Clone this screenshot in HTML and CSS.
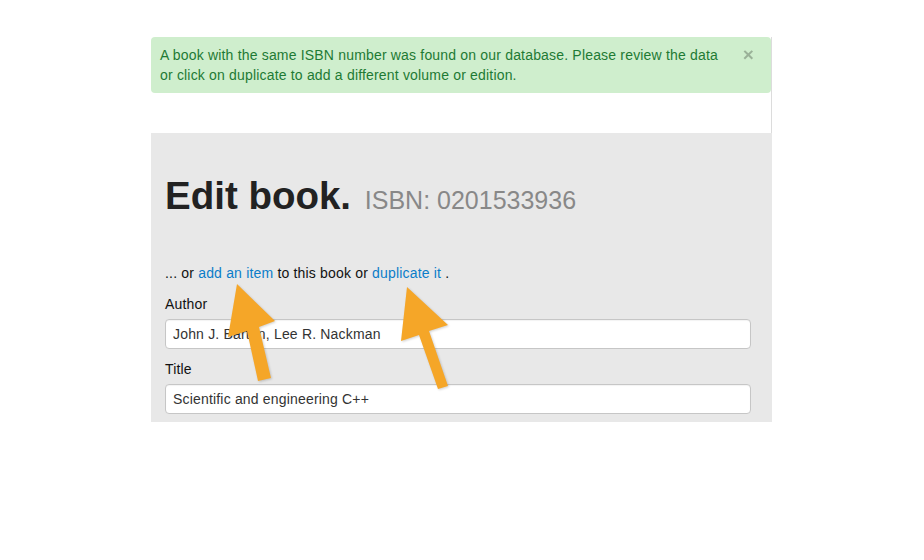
FILE: index.html
```html
<!DOCTYPE html>
<html>
<head>
<meta charset="utf-8">
<link rel="stylesheet" href="styles.css">
</head>
<body>
<div class="page">
  <div class="top">
    <div class="alert">
      <div class="alert-text">A book with the same ISBN number was found on our database. Please review the data or click on duplicate to add a different volume or edition.</div>
      <span class="close">×</span>
    </div>
  </div>
  <div class="panel">
    <h1 class="title">Edit book. <small class="isbn">ISBN: 0201533936</small></h1>
    <p class="actions">... or <a class="link" href="#">add an item</a> to this book or <a class="link" href="#">duplicate it</a> .</p>
    <label class="label">Author</label>
    <input class="field" type="text" value="John J. Barton, Lee R. Nackman">
    <label class="label label-gap">Title</label>
    <input class="field" type="text" value="Scientific and engineering C++">
  </div>
</div>
<svg class="arrows" width="924" height="560" viewBox="0 0 924 560">
  <g class="arrow-shapes">
    <polygon points="237,284 275,321 259,327 271,378 258,381 247,331 228,337"/>
    <polygon points="407,287 448,325 429,331 448,386 438,389 419,335 401,341"/>
  </g>
</svg>
</body>
</html>
```

FILE: styles.css
```css
html, body {
  margin: 0;
  padding: 0;
  background: #ffffff;
}
body {
  font-family: "Liberation Sans", Arial, sans-serif;
  font-size: 14px;
  line-height: 20px;
  letter-spacing: 0.18px;
  color: #222222;
  position: relative;
  width: 924px;
  height: 560px;
  overflow: hidden;
}
.page {
  margin-left: 151px;
  padding-top: 37px;
  width: 621px;
}
.top {
  width: 620px;
  border-right: 1px solid #dcdcdc;
  height: 96px;
}
.alert {
  display: flex;
  align-items: flex-start;
  background: #cfeecd;
  color: #1e7a34;
  border-radius: 4px;
  padding: 8px 17px 8px 9px;
  height: 40px;
}
.alert-text {
  width: 562px;
}
.close {
  margin-left: auto;
  font-size: 19px;
  font-weight: bold;
  line-height: 20px;
  color: #000000;
  opacity: 0.25;
}
.panel {
  background: #e8e8e8;
  padding: 41px 20px 8px 14px;
  height: 240px;
}
.title {
  margin: 0;
  font-size: 38.5px;
  line-height: 44px;
  font-weight: bold;
  color: #222222;
  letter-spacing: 0;
}
.isbn {
  margin-left: 3px;
  font-size: 25px;
  font-weight: normal;
  color: #888888;
  letter-spacing: 0;
}
.actions {
  margin: 41px 0 0 0;
  color: #111111;
}
.link {
  color: #0b7dc9;
  text-decoration: none;
}
.label {
  display: block;
  margin-top: 11px;
  color: #111111;
}
.label-gap {
  margin-top: 10px;
}
.field {
  display: block;
  box-sizing: border-box;
  margin-top: 5px;
  width: 586px;
  height: 30px;
  padding: 0 7px;
  border: 1px solid #c6c6c6;
  border-radius: 4px;
  background: #ffffff;
  font-family: "Liberation Sans", Arial, sans-serif;
  font-size: 14px;
  letter-spacing: 0.18px;
  color: #333333;
  box-shadow: inset 0 1px 1px rgba(0,0,0,0.05);
}
.arrows {
  position: absolute;
  top: 0;
  left: 0;
  pointer-events: none;
}
.arrow-shapes {
  fill: #f5a628;
  filter: drop-shadow(1px 1px 1px rgba(0,0,0,0.18));
}
```
